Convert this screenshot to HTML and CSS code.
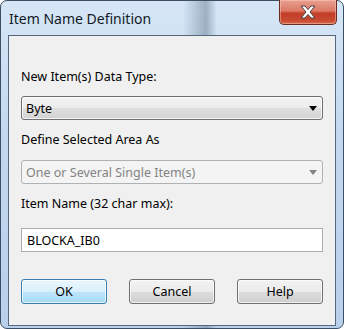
FILE: index.html
```html
<!DOCTYPE html>
<html lang="en">
<head>
    <meta charset="UTF-8">
    <title>Item Name Definition</title>
    <link rel="stylesheet" href="styles.css">
</head>
<body>

    <div class="window">
        <div class="titlebar">
            <span class="title">Item Name Definition</span>
            <button type="button" class="close-btn" aria-label="Close">
                <svg width="20" height="14" viewBox="0 0 20 14">
                    <path d="M3 1 L7 1 L10 4.5 L13 1 L17 1 L12 7 L17 13 L13 13 L10 9.5 L7 13 L3 13 L8 7 Z"
                          fill="#ffffff" stroke="#4a3a3a" stroke-width="1" stroke-linejoin="round"/>
                </svg>
            </button>
        </div>

        <div class="client">
            <label class="field-label first">New Item(s) Data Type:</label>
            <div class="combo">
                <span>Byte</span>
                <span class="arrow"></span>
            </div>

            <label class="field-label">Define Selected Area As</label>
            <div class="combo disabled">
                <span>One or Several Single Item(s)</span>
                <span class="arrow"></span>
            </div>

            <label class="field-label">Item Name (32 char max):</label>
            <div class="textbox">BLOCKA_IB0</div>

            <div class="buttons">
                <button type="button" class="btn default">OK</button>
                <button type="button" class="btn">Cancel</button>
                <button type="button" class="btn">Help</button>
            </div>
        </div>
    </div>

</body>
</html>
```

FILE: styles.css
```css
body {
    margin: 0;
    font-family: 'Noto Sans', sans-serif;
    font-size: 12.5px;
    color: #000;
    background-color: #ffffff;
}

/* Window frame */
.window {
    width: 344px;
    height: 329px;
    box-sizing: border-box;
    border: 1px solid #3b4f66;
    border-radius: 7px;
    padding: 0 7px 2px 7px;
    display: flex;
    flex-direction: column;
    background:
        linear-gradient(90deg, transparent 182px, rgba(120, 140, 160, 0.35) 195px, rgba(90, 110, 130, 0.45) 205px, transparent 216px),
        linear-gradient(180deg, #d6e6f6 0%, #c4d9ef 40%, #b9d0ea 100%);
}

/* Title bar */
.titlebar {
    height: 34px;
    display: flex;
    justify-content: space-between;
    align-items: flex-start;
}

.title {
    margin-left: 1px;
    padding-top: 9px;
    font-size: 14px;
    line-height: 18px;
    color: #111a26;
}

.close-btn {
    width: 58px;
    height: 25px;
    margin-top: -1px;
    margin-right: -1px;
    padding: 0;
    border: 1px solid #6b2a22;
    border-top: none;
    border-radius: 0 0 5px 5px;
    background: linear-gradient(180deg, #e9a090 0%, #db7a66 45%, #c23e28 55%, #c84a31 85%, #d86a4c 100%);
    box-shadow: inset 0 0 0 1px rgba(255, 210, 200, 0.45);
    display: flex;
    justify-content: center;
    align-items: center;
}

/* Client area */
.client {
    flex: 1;
    border: 1px solid #55677d;
    background-color: #f0f0f0;
    padding: 0 12px;
    display: flex;
    flex-direction: column;
}

.field-label {
    display: block;
    line-height: 15px;
    margin-top: 12px;
}

.field-label.first {
    margin-top: 33px;
}

/* Combo boxes */
.combo {
    height: 24px;
    box-sizing: border-box;
    margin-top: 12px;
    border: 1px solid #707070;
    border-radius: 3px;
    padding: 0 5px 0 4px;
    display: flex;
    justify-content: space-between;
    align-items: center;
    background: linear-gradient(180deg, #f3f3f3 0%, #ececec 50%, #dfdfdf 51%, #d3d3d3 100%);
    box-shadow: inset 0 0 0 1px rgba(255, 255, 255, 0.7);
}

.combo .arrow {
    width: 0;
    height: 0;
    border-left: 4.5px solid transparent;
    border-right: 4.5px solid transparent;
    border-top: 5px solid #000;
}

.combo.disabled {
    margin-top: 13px;
    border-color: #adb2b5;
    background: #f4f4f4;
    color: #838383;
    box-shadow: none;
}

.combo.disabled .arrow {
    border-top-color: #838383;
}

/* Text box */
.textbox {
    height: 24px;
    box-sizing: border-box;
    margin-top: 17px;
    border: 1px solid #abadb3;
    background-color: #ffffff;
    padding-left: 5px;
    display: flex;
    align-items: center;
}

/* Buttons */
.buttons {
    margin-top: 27px;
    display: flex;
    justify-content: space-between;
}

.btn {
    width: 86px;
    height: 25px;
    padding: 0;
    font-family: inherit;
    font-size: 12.5px;
    color: #000;
    border: 1px solid #707070;
    border-radius: 3px;
    background: linear-gradient(180deg, #f2f2f2 0%, #ebebeb 50%, #dddddd 51%, #cfcfcf 100%);
    box-shadow: inset 0 0 0 1px rgba(255, 255, 255, 0.7);
}

.btn.default {
    border-color: #3c7fb1;
    background: linear-gradient(180deg, #eaf6fd 0%, #d9f0fc 50%, #bee6fd 51%, #a7d9f5 100%);
}
```
